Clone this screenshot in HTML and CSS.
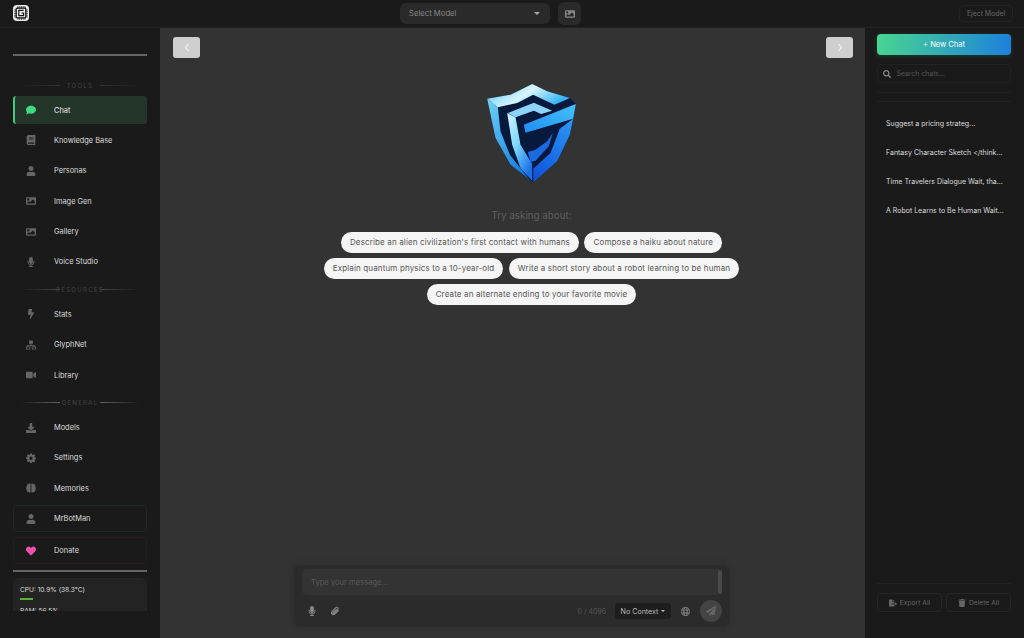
FILE: index.html
```html
<!doctype html>
<html lang="en">
<head>
	<meta charset="UTF-8">
	<title>Chat</title>
	<link rel="stylesheet" href="styles.css">
</head>
<body>
	<svg class="defs" width="0" height="0">
		<symbol id="i-comment" viewBox="0 0 512 512"><path d="M256 32C114.6 32 0 125.1 0 240c0 49.6 21.4 95 57 130.7C44.5 421.1 2.7 466 2.2 466.5c-2.2 2.3-2.8 5.7-1.5 8.7S4.8 480 8 480c66.3 0 116-31.8 140.6-51.4 32.7 12.3 69 19.4 107.4 19.4 141.4 0 256-93.1 256-208S397.4 32 256 32z"/></symbol>
		<symbol id="i-book" viewBox="0 0 448 512"><path d="M448 360V24c0-13.3-10.7-24-24-24H96C43 0 0 43 0 96v320c0 53 43 96 96 96h328c13.3 0 24-10.7 24-24v-16c0-7.5-3.5-14.3-8.9-18.7-4.2-15.4-4.2-59.3 0-74.7 5.4-4.3 8.9-11.1 8.9-18.6zM128 134c0-3.3 2.7-6 6-6h212c3.3 0 6 2.7 6 6v20c0 3.3-2.7 6-6 6H134c-3.3 0-6-2.7-6-6v-20zm0 64c0-3.3 2.7-6 6-6h212c3.3 0 6 2.7 6 6v20c0 3.3-2.7 6-6 6H134c-3.3 0-6-2.7-6-6v-20zm253.4 250H96c-17.7 0-32-14.3-32-32 0-17.6 14.4-32 32-32h285.4c-1.9 17.1-1.9 46.9 0 64z"/></symbol>
		<symbol id="i-user" viewBox="0 0 448 512"><path d="M224 256c70.7 0 128-57.3 128-128S294.7 0 224 0 96 57.3 96 128s57.3 128 128 128zm89.6 32h-16.7c-22.2 10.2-46.9 16-72.9 16s-50.6-5.8-72.9-16h-16.7C60.2 288 0 348.2 0 422.4V464c0 26.5 21.5 48 48 48h352c26.5 0 48-21.5 48-48v-41.6c0-74.2-60.2-134.4-134.4-134.4z"/></symbol>
		<symbol id="i-image" viewBox="0 0 512 512"><path d="M464 448H48c-26.51 0-48-21.49-48-48V112c0-26.51 21.49-48 48-48h416c26.51 0 48 21.49 48 48v288c0 26.51-21.49 48-48 48zM112 120c-30.928 0-56 25.072-56 56s25.072 56 56 56 56-25.072 56-56-25.072-56-56-56zM64 384h384V272l-87.515-87.515c-4.686-4.686-12.284-4.686-16.971 0L208 320l-55.515-55.515c-4.686-4.686-12.284-4.686-16.971 0L64 336v48z"/></symbol>
		<symbol id="i-mic" viewBox="0 0 352 512"><path d="M176 352c53.02 0 96-42.98 96-96V96c0-53.02-42.98-96-96-96S80 42.98 80 96v160c0 53.02 42.98 96 96 96zm160-160h-16c-8.84 0-16 7.16-16 16v48c0 74.8-64.49 134.82-140.79 127.38C96.71 376.89 48 317.11 48 250.3V208c0-8.84-7.16-16-16-16H16c-8.84 0-16 7.16-16 16v40.16c0 89.64 63.97 169.55 152 181.69V464H96c-8.84 0-16 7.16-16 16v16c0 8.84 7.16 16 16 16h160c8.84 0 16-7.16 16-16v-16c0-8.84-7.16-16-16-16h-56v-33.77C285.71 418.47 352 344.9 352 256v-48c0-8.84-7.16-16-16-16z"/></symbol>
		<symbol id="i-bolt" viewBox="0 0 320 512"><path d="M296 160H180.6l42.6-129.8C227.2 15 215.7 0 200 0H56C44 0 33.8 8.9 32.2 20.8l-32 240C-1.7 275.2 9.5 288 24 288h118.7L96.6 482.5c-3.6 15.2 8 29.5 23.3 29.5 8.4 0 16.4-4.4 20.8-12l176-304c9.3-15.9-2.2-36-20.7-36z"/></symbol>
		<symbol id="i-sitemap" viewBox="0 0 24 24"><path fill-rule="evenodd" d="M7.500 1h9v8h-3.500v3h8v3.500H24V23H14v-7.500h5V14h-6v1.500h-2V14H5v1.500h5V23H0v-7.500h3V12h8V9H7.500zM2 17.500V21h6v-3.500zM16 17.500V21h6v-3.500z"/></symbol>
		<symbol id="i-video" viewBox="0 0 576 512"><path d="M336.2 64H47.8C21.4 64 0 85.4 0 111.8v288.4C0 426.6 21.4 448 47.8 448h288.4c26.4 0 47.8-21.4 47.8-47.8V111.8c0-26.4-21.4-47.8-47.8-47.8zm189.4 37.7L416 177.3v157.4l109.6 75.5c21.2 14.6 50.4-.3 50.4-25.8V127.5c0-25.4-29.1-40.4-50.4-25.8z"/></symbol>
		<symbol id="i-download" viewBox="0 0 512 512"><path d="M216 0h80c13 0 24 11 24 24v168h88c18 0 27 21 14 34L270 378c-8 8-20 8-28 0L90 226c-13-13-4-34 14-34h88V24c0-13 11-24 24-24zM512 376v112c0 13-11 24-24 24H24c-13 0-24-11-24-24V376c0-13 11-24 24-24h147l49 49c20 20 52 20 72 0l49-49h147c13 0 24 11 24 24z"/></symbol>
		<symbol id="i-cog" viewBox="0 0 24 24"><path fill-rule="evenodd" d="M10 1h4l.6 3.1 1.900.8L19.100 3 22 6l-1.800 2.600.8 1.900 3 .5v4l-3 .6-.8 1.900 1.800 2.600-2.900 2.900-2.600-1.800-1.900.8L14 24h-4l-.6-3-1.900-.8L4.900 22 2 19.100l1.800-2.600-.8-1.900-3-.6v-4l3-.5.8-1.900L2 6l2.900-3 2.600 1.900 1.900-.8zM12 8.500a4 4 0 1 0 0 8 4 4 0 0 0 0-8z"/></symbol>
		<symbol id="i-brain" viewBox="0 0 24 24"><path d="M11 2v20c-1 1-3 1-4 0-3 0-5-2-5-4-2-2-2-9 0-11 0-3 3-5 5-5 1-1 3-1 4 0zM13 2c1-1 3-1 4 0 2 0 5 2 5 5 2 2 2 9 0 11 0 2-2 4-5 4-1 1-3 1-4 0z"/></symbol>
		<symbol id="i-heart" viewBox="0 0 512 512"><path d="M462.3 62.6C407.5 15.900 326 24.300 275.700 76.200L256 96.500l-19.700-20.300C186.100 24.300 104.500 15.900 49.700 62.600c-62.800 53.600-66.100 149.800-9.900 207.900l193.500 199.800c12.500 12.900 32.800 12.900 45.300 0l193.500-199.800c56.300-58.100 53-154.300-9.800-207.900z"/></symbol>
		<symbol id="i-search" viewBox="0 0 512 512"><path d="M505 442.700L405.300 343c-4.500-4.500-10.600-7-17-7H372c27.600-35.300 44-79.700 44-128C416 93.100 322.900 0 208 0S0 93.100 0 208s93.100 208 208 208c48.300 0 92.700-16.400 128-44v16.300c0 6.400 2.500 12.500 7 17l99.700 99.700c9.400 9.400 24.600 9.400 33.900 0l28.300-28.300c9.400-9.400 9.400-24.600.1-34zM208 336c-70.700 0-128-57.200-128-128 0-70.700 57.200-128 128-128 70.700 0 128 57.200 128 128 0 70.700-57.200 128-128 128z"/></symbol>
		<symbol id="i-clip" viewBox="0 0 24 24"><path fill="none" stroke="currentColor" stroke-width="2.600" stroke-linecap="round" d="M20 11l-8.500 8.500a4.600 4.600 0 0 1-6.500-6.500L14 4a3 3 0 0 1 4.500 4.500L9.500 17.500a1.400 1.400 0 0 1-2-2L15 8"/></symbol>
		<symbol id="i-globe" viewBox="0 0 24 24"><path fill-rule="evenodd" d="M12 0a12 12 0 1 1 0 24 12 12 0 0 1 0-24zM8 2.600A10.500 10.500 0 0 0 3 7h3.700C7 5.300 7.400 3.800 8 2.600zM9.200 7h5.600C14.200 3.600 13 2 12 2s-2.200 1.600-2.800 5zM17.300 7H21a10.500 10.500 0 0 0-5-4.400c.6 1.200 1 2.700 1.300 4.400zM2 9.500a11 11 0 0 0 0 5h4.400a30 30 0 0 1 0-5zM9 9.500a26 26 0 0 0 0 5h6a26 26 0 0 0 0-5zM17.600 9.500a30 30 0 0 1 0 5H22a11 11 0 0 0 0-5zM3 17a10.500 10.500 0 0 0 5 4.400c-.6-1.200-1-2.700-1.300-4.400zM9.200 17c.6 3.400 1.800 5 2.800 5s2.200-1.600 2.800-5zM17.300 17c-.3 1.700-.7 3.200-1.300 4.400a10.500 10.500 0 0 0 5-4.400z"/></symbol>
		<symbol id="i-plane" viewBox="0 0 512 512"><path d="M476 3.200L12.500 270.600c-18.100 10.400-15.800 35.600 2.200 43.200L121 358.400l287.300-253.200c5.500-4.900 13.300 2.600 8.600 8.300L176 407v80.500c0 23.600 28.500 32.900 42.500 15.800L282 426l124.600 52.200c14.200 6 30.400-2.900 33-18.200l72-432C515 7.800 493.300-6.800 476 3.200z"/></symbol>
		<symbol id="i-export" viewBox="0 0 576 512"><path d="M384 121.900c0-6.300-2.500-12.400-7-16.900L279.100 7c-4.500-4.500-10.600-7-17-7H256v128h128zM571 308l-95.700-96.400c-10.100-10.100-27.400-3-27.400 11.300V288h-64v64h64v65.200c0 14.300 17.300 21.400 27.400 11.300L571 332c6.600-6.600 6.600-17.400 0-24zM192 336v-32c0-8.800 7.200-16 16-16h176V160H248c-13.200 0-24-10.800-24-24V0H24C10.700 0 0 10.700 0 24v464c0 13.300 10.700 24 24 24h336c13.300 0 24-10.700 24-24V352H208c-8.800 0-16-7.200-16-16z"/></symbol>
		<symbol id="i-trash" viewBox="0 0 448 512"><path d="M432 32H312l-9.400-18.700A24 24 0 0 0 281.100 0H166.800a23.720 23.720 0 0 0-21.400 13.300L136 32H16A16 16 0 0 0 0 48v32a16 16 0 0 0 16 16h416a16 16 0 0 0 16-16V48a16 16 0 0 0-16-16zM53.200 467a48 48 0 0 0 47.900 45h245.800a48 48 0 0 0 47.900-45L416 128H32z"/></symbol>
	</svg>

	<header class="topbar">
		<div class="app-logo">
			<svg viewBox="0 0 16 16" width="14" height="14">
				<path class="chip-pins" d="M4.500 0v16M6.500 0v16M8.500 0v16M10.500 0v16M12.500 0v16M0 4.500h16M0 6.500h16M0 8.500h16M0 10.500h16M0 12.500h16"/>
				<rect class="chip-body" x="2.500" y="2.500" width="11" height="11" rx="1"/>
				<path class="chip-mark" d="M11 5H5.500v6H11V8H8.500"/>
			</svg>
		</div>
		<div class="model-group">
			<div class="model-select">
				<span>Select Model</span>
				<i class="caret"></i>
			</div>
			<button class="model-img"><svg class="icon"><use href="#i-image"/></svg></button>
		</div>
		<button class="eject">Eject Model</button>
	</header>

	<div class="layout">
		<aside class="sidebar">
			<div class="side-rule first"></div>

			<section class="nav-section">
				<h4 class="nav-title tools"><i></i><span>TOOLS</span><i></i></h4>
				<ul class="nav-list">
					<li class="nav-item on"><svg class="icon"><use href="#i-comment"/></svg>Chat</li>
					<li class="nav-item"><svg class="icon"><use href="#i-book"/></svg>Knowledge Base</li>
					<li class="nav-item"><svg class="icon"><use href="#i-user"/></svg>Personas</li>
					<li class="nav-item"><svg class="icon"><use href="#i-image"/></svg>Image Gen</li>
					<li class="nav-item"><svg class="icon"><use href="#i-image"/></svg>Gallery</li>
					<li class="nav-item"><svg class="icon"><use href="#i-mic"/></svg>Voice Studio</li>
				</ul>
			</section>

			<section class="nav-section">
				<h4 class="nav-title"><i></i><span>RESOURCES</span><i></i></h4>
				<ul class="nav-list">
					<li class="nav-item"><svg class="icon"><use href="#i-bolt"/></svg>Stats</li>
					<li class="nav-item"><svg class="icon"><use href="#i-sitemap"/></svg>GlyphNet</li>
					<li class="nav-item"><svg class="icon"><use href="#i-video"/></svg>Library</li>
				</ul>
			</section>

			<section class="nav-section">
				<h4 class="nav-title general"><i></i><span>GENERAL</span><i></i></h4>
				<ul class="nav-list">
					<li class="nav-item"><svg class="icon"><use href="#i-download"/></svg>Models</li>
					<li class="nav-item"><svg class="icon"><use href="#i-cog"/></svg>Settings</li>
					<li class="nav-item"><svg class="icon"><use href="#i-brain"/></svg>Memories</li>
				</ul>
			</section>

			<div class="nav-box user"><svg class="icon"><use href="#i-user"/></svg>MrBotMan</div>
			<div class="nav-box donate"><svg class="icon"><use href="#i-heart"/></svg>Donate</div>

			<div class="side-rule"></div>

			<div class="sys-clip">
				<div class="sys-card">
					<div>CPU: 10.9% (38.3°C)</div>
					<div class="sys-bar"></div>
					<div>RAM: 56.5%</div>
				</div>
			</div>
		</aside>

		<main class="main">
			<div class="pager">
				<button class="page-btn"><svg viewBox="0 0 8 12" width="6" height="9"><path d="M6 1.500 2 6l4 4.500"/></svg></button>
				<button class="page-btn"><svg viewBox="0 0 8 12" width="6" height="9"><path d="M2 1.500 6 6l-4 4.500"/></svg></button>
			</div>

			<div class="welcome">
				<svg class="shield" viewBox="50 28 266 294" width="89" height="98">
					<defs>
						<linearGradient id="g-top" x1="0" y1="0" x2="1" y2="0.4"><stop offset="0" stop-color="#4fc3f7"/><stop offset=".55" stop-color="#d8f6ff"/><stop offset="1" stop-color="#39b6f5"/></linearGradient>
						<linearGradient id="g-left" x1="0" y1="0" x2="0.7" y2="1"><stop offset="0" stop-color="#6ed4fb"/><stop offset="1" stop-color="#1477d8"/></linearGradient>
						<linearGradient id="g-front" x1="0" y1="0" x2="0.7" y2="1"><stop offset="0" stop-color="#d3f5ff"/><stop offset=".5" stop-color="#7cd6fb"/><stop offset="1" stop-color="#1a6fe6"/></linearGradient>
						<linearGradient id="g-right" x1="0" y1="1" x2="1" y2="0"><stop offset="0" stop-color="#1f8cf0"/><stop offset="1" stop-color="#45c4fb"/></linearGradient>
						<linearGradient id="g-low" x1="0.8" y1="0" x2="0.2" y2="1"><stop offset="0" stop-color="#2a93f5"/><stop offset="1" stop-color="#1054dc"/></linearGradient>
					</defs>
					<path fill="#07193c" d="M50 72 120 60 185 28 230 50 298 70 316 88 308 132 298 180 260 260 187 322 120 270 75 190z"/>
					<path fill="url(#g-left)" d="M50 72 82 98 90 170 118 240 178 316 187 322 120 270 75 190z"/>
					<path fill="url(#g-top)" d="M50 72 120 60 185 28 230 50 298 70 252 90 188 60 140 85 82 98z"/>
					<path fill="url(#g-front)" d="M110 115 135 128 150 210 185 268 185 318 150 280 125 210z"/>
					<path fill="#8ed3fb" d="M112 115 190 84 245 108 212 118 190 108 135 128z"/>
					<path fill="url(#g-right)" d="M160 150 316 88 308 132 165 174z"/>
					<path fill="url(#g-low)" d="M268 162 308 132 298 180 260 260 189 322 188 282 240 235z"/>
					<path fill="#1a6ae0" d="M172 232 195 225 230 200 247 175 235 215 195 258 180 262z"/>
				</svg>
				<p class="try">Try asking about:</p>
				<div class="chips">
					<button class="chip">Describe an alien civilization's first contact with humans</button>
					<button class="chip">Compose a haiku about nature</button>
					<button class="chip">Explain quantum physics to a 10-year-old</button>
					<button class="chip">Write a short story about a robot learning to be human</button>
					<button class="chip">Create an alternate ending to your favorite movie</button>
				</div>
			</div>

			<div class="composer">
				<div class="input-box">
					<span>Type your message...</span>
					<i class="scroll"></i>
				</div>
				<div class="tool-row">
					<svg class="icon tool mic"><use href="#i-mic"/></svg>
					<svg class="icon tool"><use href="#i-clip"/></svg>
					<span class="count">0 / 4096</span>
					<div class="context">No Context<i class="caret"></i></div>
					<svg class="icon tool globe"><use href="#i-globe"/></svg>
					<button class="send"><svg class="icon"><use href="#i-plane"/></svg></button>
				</div>
			</div>
		</main>

		<aside class="history">
			<button class="new-chat">+ New Chat</button>
			<div class="search"><svg class="icon"><use href="#i-search"/></svg><span>Search chats...</span></div>
			<div class="hist-rule"></div>
			<ul class="chat-list">
				<li>Suggest a pricing strateg...</li>
				<li>Fantasy Character Sketch &lt;/think...</li>
				<li>Time Travelers Dialogue Wait, tha...</li>
				<li>A Robot Learns to Be Human Wait...</li>
			</ul>
			<div class="hist-foot">
				<button class="foot-btn"><svg class="icon"><use href="#i-export"/></svg>Export All</button>
				<button class="foot-btn"><svg class="icon"><use href="#i-trash"/></svg>Delete All</button>
			</div>
		</aside>
	</div>
</body>
</html>
```

FILE: styles.css
```css
*{box-sizing:border-box;}
html,body{height:100%;}
body,ul,li,h4,p{margin:0;padding:0;}
ul{list-style:none;}
body{display:flex;flex-direction:column;overflow:hidden;background:#1a1a1a;color:#ddd;font-family:"Inter","Liberation Sans",sans-serif;font-size:7.400px;}
button{padding:0;border:none;background:none;color:inherit;font:inherit;}
.defs{display:block;height:0;}
.icon{display:block;width:10px;height:10px;fill:currentColor;}

/* top bar */
.topbar{display:flex;flex:none;align-items:center;justify-content:space-between;height:28px;padding:0 11px 0 13px;border-bottom:1px solid #232323;}
.app-logo{display:flex;align-items:center;justify-content:center;width:16px;height:16px;margin-top:-1px;border-radius:4px;background:#eee;}
.chip-pins{fill:none;stroke:#222;stroke-width:.8;}
.chip-body{fill:#eee;stroke:#111;stroke-width:1.400;}
.chip-mark{fill:none;stroke:#111;stroke-width:1.300;}
.model-group{display:flex;align-items:center;gap:8px;margin:0 7px 0 0;}
.model-select{display:flex;align-items:center;justify-content:space-between;width:150px;height:21px;padding:0 10px 0 9px;border-radius:6px;background:#2a2a2a;color:#888;font-size:7.700px;}
.caret{display:block;width:0;height:0;border-top:3px solid currentColor;border-left:2.500px solid transparent;border-right:2.500px solid transparent;}
.model-select .caret{border-top-color:#aaa;border-left-width:3px;border-right-width:3px;}
.model-img{display:flex;align-items:center;justify-content:center;width:23px;height:23px;border-radius:6px;background:#2a2a2a;color:#888;}
.eject{width:54px;height:17px;border:1px solid #232323;border-radius:4px;color:#666;font-size:6.900px;}

.layout{display:flex;flex:1;min-height:0;}

/* left sidebar */
.sidebar{flex:none;width:160px;padding:0 13px;}
.side-rule{height:2px;margin:6px 0;background:#666;}
.side-rule.first{margin:26px 0 18px;}
.nav-section{margin-bottom:2.400px;}
.nav-title{display:grid;grid-template-columns:40px 40px 40px;justify-content:center;align-items:center;height:22px;color:#444;font-size:6px;font-weight:400;letter-spacing:1.300px;}
.nav-title span{justify-self:center;}
.nav-title i{height:1px;background:linear-gradient(to right,transparent,#444);}
.nav-title i:last-child{background:linear-gradient(to left,transparent,#444);}
.nav-title.tools i{background:linear-gradient(to right,transparent,#333);}
.nav-title.tools i:last-child{background:linear-gradient(to left,transparent,#333);}
.nav-title.general i{background:linear-gradient(to right,transparent,#666);}
.nav-title.general i:last-child{background:linear-gradient(to left,transparent,#666);}
.nav-list{display:flex;flex-direction:column;gap:2.400px;}
.nav-item,.nav-box{display:flex;align-items:center;gap:18px;height:28px;padding-left:13px;}
.nav-item .icon,.nav-box .icon{flex:none;color:#666;}
.nav-item.on{padding-left:11px;border-left:2px solid #3ecf7a;border-radius:3px;background:#24352a;color:#eee;}
.nav-item.on .icon{color:#3ddc84;}
.nav-box{height:27px;padding-left:12px;border:1px solid #222;border-radius:4px;}
.nav-box.user{margin-top:3px;border-color:#1c2a24;}
.nav-box.donate{margin-top:5px;border-color:#2a1b20;}
.nav-box.donate .icon{color:#f050b0;}
.sys-clip{height:33px;overflow:hidden;}
.sys-card{height:60px;padding:6px;border:1px solid #262626;border-radius:6px;background:#232323;font-size:6.600px;line-height:10px;}
.sys-bar{width:13px;height:2px;margin:2.500px 0 6px;background:#55b52a;}

/* middle */
.main{display:flex;flex:1;flex-direction:column;min-width:0;padding:9px 12px 10px 13px;background:#333;}
.pager{display:flex;justify-content:space-between;}
.page-btn{display:flex;align-items:center;justify-content:center;width:27px;height:21px;border-radius:3px;background:#cfcfcf;}
.page-btn svg{fill:none;stroke:#f4f4f4;stroke-width:1.500;}
.welcome{display:flex;flex:1;flex-direction:column;align-items:center;margin-left:37px;padding-top:26px;}
.shield{display:block;}
.try{margin-top:28px;color:#5e5e5e;font-size:9.800px;line-height:12px;}
.chips{display:flex;flex-wrap:wrap;justify-content:center;gap:5.500px;width:420px;margin-top:10px;}
.chip{height:20.500px;padding:0 9px;border-radius:11px;background:#f5f5f5;color:#555;font-size:8px;letter-spacing:.14px;white-space:nowrap;}

.composer{align-self:center;width:437px;height:64px;margin-right:3px;padding:4px 7px 0 8px;border:1px solid #2f2f2f;border-radius:8px;background:#2b2b2b;box-shadow:0 0 8px rgba(0,0,0,.12);}
.input-box{display:flex;align-items:center;justify-content:space-between;height:26px;padding-left:9px;border-radius:5px;background:#333;color:#585858;font-size:7.600px;}
.scroll{display:block;width:4px;height:24px;border-radius:2px;background:#4a4a4a;}
.tool-row{display:flex;align-items:center;height:26px;margin-top:3px;padding-left:5px;color:#888;}
.tool{margin-right:13px;}
.count{margin-left:auto;margin-right:9px;color:#555;font-size:7px;}
.context{display:flex;align-items:center;gap:3px;justify-content:center;width:56px;height:16px;margin-right:10px;border-radius:3px;background:#1e1e1e;color:#bbb;font-size:7.100px;}
.context .caret{border-top-width:2px;border-left-width:2px;border-right-width:2px;}
.tool.globe{width:9px;height:9px;margin-right:10px;}
.send{display:flex;align-items:center;justify-content:center;flex:none;width:22px;height:22px;border-radius:50%;background:#444;color:#666;}

/* right panel */
.history{display:flex;flex:none;flex-direction:column;width:159px;padding:6px 13px 26px 12px;}
.new-chat{flex:none;height:21px;border-radius:4px;background:linear-gradient(100deg,#48d690,#1e7fdc);box-shadow:0 1px 5px rgba(60,200,140,.2);color:#fff;font-size:7.500px;}
.search{display:flex;flex:none;align-items:center;gap:5.500px;height:19px;margin-top:9px;padding-left:5px;border:1px solid #212121;border-radius:4px;color:#555;font-size:6.900px;}
.search .icon{width:8px;height:8px;color:#888;}
.hist-rule{flex:none;height:10px;margin-top:9px;border-top:1px solid #222;border-bottom:1px solid #222;}
.chat-list{flex:1;margin-top:7px;}
.chat-list li{height:29px;padding-left:9px;color:#ddd;font-size:7px;line-height:29px;white-space:nowrap;}
.hist-foot{display:flex;flex:none;gap:4px;padding-top:9px;border-top:1px solid #222;}
.foot-btn{display:flex;flex:1;align-items:center;justify-content:center;gap:3px;height:19px;border:1px solid #252525;border-radius:4px;color:#666;font-size:6.700px;}
.foot-btn .icon{width:8px;height:8px;}
```
